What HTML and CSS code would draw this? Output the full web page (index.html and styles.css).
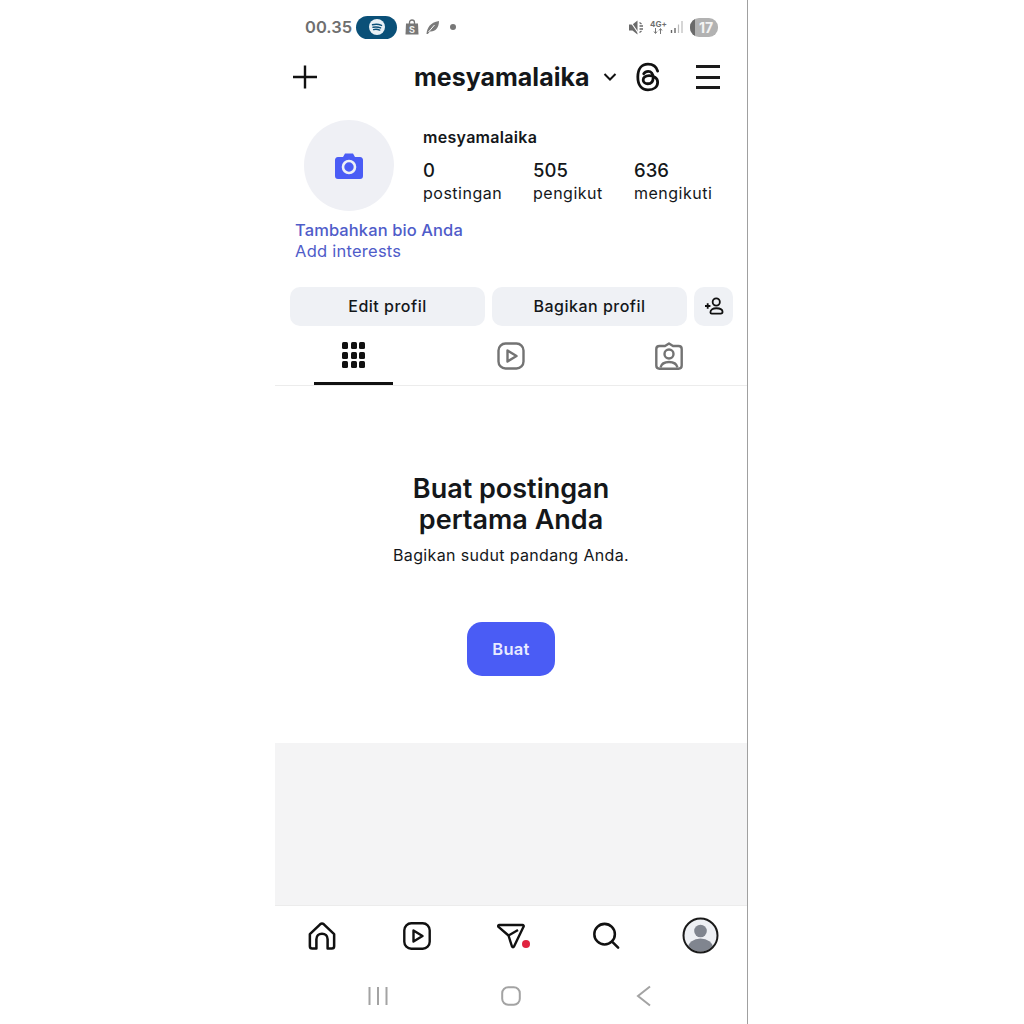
FILE: index.html
```html
<!DOCTYPE html>
<html lang="en">
<head>
    <meta charset="UTF-8">
    <link rel="stylesheet" href="styles.css">
</head>
<body>
    <div class="phone">
        <!-- status bar -->
        <div class="status">
            <span class="time">00.35</span>
            <span class="pill">
                <svg width="18" height="18" viewBox="0 0 18 18"><circle cx="9" cy="9" r="8" fill="#e9f1f6"/><path d="M4.500 6.800C7.500 6 10.500 6.100 13.500 7.400M5 9.300C7.400 8.700 10 8.800 12.600 9.900M5.600 11.600C7.600 11.100 9.700 11.200 11.700 12.100" fill="none" stroke="#0a5078" stroke-width="1.400" stroke-linecap="round"/></svg>
            </span>
            <span class="shop">
                <svg width="14" height="16" viewBox="0 0 14 16"><path d="M4.500 5V3.500C4.500 2 5.500 1 7 1C8.500 1 9.500 2 9.500 3.500V5" fill="none" stroke="#777" stroke-width="1.300"/><path d="M1 4.500H13L13.500 15.500H.5Z" fill="#777"/><text x="7" y="13.500" class="shop-s">S</text></svg>
            </span>
            <svg class="leaf" width="15" height="15" viewBox="0 0 15 15"><path d="M1.500 14C2 8 5 2.500 14 1C14 8 10 12 5 11.500L2.800 14Z" fill="#7b7b7b"/><path d="M3.500 12L9.500 5" stroke="#fff" stroke-width="1"/></svg>
            <span class="dot"></span>
            <span class="status-right">
                <svg width="15" height="15" viewBox="0 0 15 15"><path d="M0 4.500H3.500L8.500 .5V14.500L3.500 10.500H0Z" fill="#6a6a6a"/><path d="M1 1L10 14" stroke="#fff" stroke-width="1.200"/><path d="M10.500 2.500L12.500 4M10.500 6H14M10.500 9H14M10.500 12.500L12.500 11" stroke="#6a6a6a" stroke-width="1.300"/></svg>
                <span class="net">4G+<svg class="net-arrows" width="12" height="6" viewBox="0 0 12 6"><path d="M3.500 0V5M2 3.500L3.500 5.500L5 3.500M8.500 6V1M7 2.500L8.500 .5L10 2.500" fill="none" stroke="#777" stroke-width="1"/></svg></span>
                <svg class="signal" width="14" height="14" viewBox="0 0 14 14"><path d="M1.500 10V13M5 8V13" stroke="#666" stroke-width="1.400"/><path d="M8.500 4.500V13M12 1V13" stroke="#bbb" stroke-width="1.200"/></svg>
                <span class="battery"><span class="battery-low"></span><span class="battery-num">17</span></span>
            </span>
        </div>

        <!-- top header -->
        <div class="header">
            <svg class="plus" width="26" height="26" viewBox="0 0 26 26"><path d="M13 1.500V24.500M1 13H25" stroke="#111" stroke-width="2.400"/></svg>
            <span class="handle">mesyamalaika</span>
            <svg class="chevron" width="16" height="10" viewBox="0 0 16 10"><path d="M2.500 2L8 7.500L13.500 2" fill="none" stroke="#111" stroke-width="2"/></svg>
            <svg class="threads" width="26" height="30" viewBox="0 0 24 28"><path d="M21 8.500C19.700 4 16.300 2 12 2C6 2 2.500 6.500 2.500 14C2.500 21.500 6 26 12 26C17.500 26 21 23 21 18.800C21 14.800 17.500 12.800 13 12.800C9.500 12.800 7.500 14.500 7.500 16.800C7.500 19 9.500 20.300 11.700 20.300C15 20.300 16.800 18.200 16.800 14.600C16.800 11 15 8.800 12.200 8.800C10.300 8.800 8.900 9.600 8 11" fill="none" stroke="#111" stroke-width="2.600" stroke-linecap="round"/></svg>
            <div class="burger"><span></span><span></span><span></span></div>
        </div>

        <!-- profile summary -->
        <div class="profile">
            <div class="avatar">
                <svg width="30" height="28" viewBox="0 0 30 28"><path d="M4 5H9L11 1.500H19L21 5H26C28 5 29 6.500 29 8V24C29 26 28 27 26 27H4C2 27 1 26 1 24V8C1 6.500 2 5 4 5Z" fill="#4a5cf5"/><circle cx="15" cy="15" r="6" fill="none" stroke="#eef0f6" stroke-width="2.600"/></svg>
            </div>
            <div class="info">
                <p class="name">mesyamalaika</p>
                <div class="stats">
                    <div class="stat stat-posts"><b>0</b><span>postingan</span></div>
                    <div class="stat stat-followers"><b>505</b><span>pengikut</span></div>
                    <div class="stat"><b>636</b><span>mengikuti</span></div>
                </div>
            </div>
        </div>
        <p class="bio">Tambahkan bio Anda</p>
        <p class="interests">Add interests</p>

        <!-- action buttons -->
        <div class="actions">
            <div class="btn">Edit profil</div>
            <div class="btn">Bagikan profil</div>
            <div class="btn btn-icon">
                <svg width="20" height="18" viewBox="0 0 22 20"><path d="M1 10H7M4 7V13" stroke="#111" stroke-width="2"/><circle cx="13.500" cy="5.500" r="4" fill="none" stroke="#111" stroke-width="2"/><path d="M7 17C7 13.800 10 12.500 13.500 12.500C17 12.500 20.500 13.800 20.500 16.500C20.500 18 19.500 18.500 18.500 18.500H8.500C7.500 18.500 7 18 7 17Z" fill="none" stroke="#111" stroke-width="2"/></svg>
            </div>
        </div>

        <!-- tabs -->
        <div class="tabs">
            <div class="tab tab-active">
                <div class="grid-icon"><i></i><i></i><i></i><i></i><i></i><i></i><i></i><i></i><i></i></div>
            </div>
            <div class="tab">
                <svg width="28" height="28" viewBox="0 0 28 28"><rect x="1.500" y="1.500" width="25" height="25" rx="7" fill="none" stroke="#737373" stroke-width="2.400"/><path d="M10.500 8.500L19.500 14L10.500 19.500Z" fill="none" stroke="#737373" stroke-width="2.400" stroke-linejoin="round"/></svg>
            </div>
            <div class="tab tab-tagged">
                <svg width="28" height="28" viewBox="0 0 28 28"><path d="M4.500 4H10L14 1.500L18 4H23.500C25.500 4 26.700 5.200 26.700 7V23.500C26.700 25.500 25.500 26.700 23.500 26.700H4.500C2.500 26.700 1.300 25.500 1.300 23.500V7C1.300 5.200 2.500 4 4.500 4Z" fill="none" stroke="#737373" stroke-width="2.400" stroke-linejoin="round"/><circle cx="14" cy="12" r="4.500" fill="none" stroke="#737373" stroke-width="2.400"/><path d="M5.500 25.500C6.500 21.500 10 20 14 20C18 20 21.500 21.500 22.500 25.500" fill="none" stroke="#737373" stroke-width="2.400"/></svg>
            </div>
        </div>

        <!-- empty state -->
        <div class="empty">
            <h1>Buat postingan<br>pertama Anda</h1>
            <p>Bagikan sudut pandang Anda.</p>
            <div class="create">Buat</div>
        </div>

        <div class="gray-area"></div>

        <!-- bottom nav -->
        <div class="nav">
            <div class="nav-item">
                <svg width="28" height="28" viewBox="0 0 30 30"><path d="M2 13L13 2.500C14.200 1.500 15.800 1.500 17 2.500L28 13V26C28 27.500 27 28.500 25.500 28.500H21V18.500C21 15 18.500 12.500 15 12.500C11.500 12.500 9 15 9 18.500V28.500H4.500C3 28.500 2 27.500 2 26Z" fill="none" stroke="#111" stroke-width="2.700" stroke-linejoin="round"/></svg>
            </div>
            <div class="nav-item">
                <svg width="28" height="28" viewBox="0 0 28 28"><rect x="1.300" y="1.300" width="25.400" height="25.400" rx="7" fill="none" stroke="#111" stroke-width="2.400"/><path d="M10.500 8.500L19.500 14L10.500 19.500Z" fill="none" stroke="#111" stroke-width="2.400" stroke-linejoin="round"/></svg>
            </div>
            <div class="nav-item">
                <svg class="send" width="28" height="26" viewBox="0 0 28 26"><path d="M2 2H25.500C26.500 2 27 3 26.500 3.800L17 23.500C16.500 24.500 15.500 24.500 15 23.500L11.500 12.500L1.500 3.800C.9 3.200 1.200 2 2 2Z" fill="none" stroke="#111" stroke-width="2.400" stroke-linejoin="round"/><path d="M11.500 12.500L21 7" stroke="#111" stroke-width="2.400"/></svg>
                <span class="red-dot"></span>
            </div>
            <div class="nav-item nav-search">
                <svg width="28" height="28" viewBox="0 0 30 30"><circle cx="13.500" cy="13" r="11" fill="none" stroke="#111" stroke-width="2.700"/><path d="M21.500 21L28 27.500" stroke="#111" stroke-width="2.700" stroke-linecap="round"/></svg>
            </div>
            <div class="nav-item nav-me">
                <svg width="37" height="37" viewBox="0 0 37 37"><defs><clipPath id="avatarClip"><circle cx="18.500" cy="18.500" r="16"/></clipPath></defs><circle cx="18.500" cy="18.500" r="16.500" fill="#eef0f4"/><g clip-path="url(#avatarClip)" fill="#80858f"><circle cx="18.500" cy="14" r="6.300"/><ellipse cx="18.500" cy="31" rx="12.500" ry="9.500"/></g><circle cx="18.500" cy="18.500" r="17" fill="none" stroke="#1a1a1a" stroke-width="2"/></svg>
            </div>
        </div>

        <!-- android buttons -->
        <div class="android">
            <div class="nav-item">
                <svg width="20" height="20" viewBox="0 0 20 20"><path d="M1.500 1V19M10 1V19M18.500 1V19" stroke="#a3a3a3" stroke-width="2"/></svg>
            </div>
            <div class="nav-item">
                <svg width="20" height="20" viewBox="0 0 20 20"><rect x="1.200" y="1.200" width="17.600" height="17.600" rx="6" fill="none" stroke="#a3a3a3" stroke-width="2"/></svg>
            </div>
            <div class="nav-item">
                <svg width="16" height="22" viewBox="0 0 16 22"><path d="M14 1.500L2 11L14 20.500" fill="none" stroke="#a3a3a3" stroke-width="2"/></svg>
            </div>
        </div>
    </div>
</body>
</html>
```

FILE: styles.css
```css
body {
    font-family: "Inter", "Liberation Sans", sans-serif;
    background-color: #fff;
    color: #14171a;
    margin: 0;
}

p, h1 {
    margin: 0;
}

svg {
    display: block;
}

.phone {
    width: 472px;
    height: 1024px;
    margin-left: 275px;
    border-right: 1px solid #a0a0a0;
    overflow: hidden;
}

/* status bar */
.status {
    display: flex;
    align-items: center;
    height: 54px;
    padding: 0 29px 0 30px;
    color: #6f6f6f;
}

.time {
    font-size: 16.500px;
    font-weight: 600;
    width: 51px;
}

.pill {
    display: flex;
    align-items: center;
    justify-content: center;
    width: 41px;
    height: 23px;
    border-radius: 12px;
    background-color: #0a5078;
}

.shop {
    width: 14px;
    margin-left: 8px;
}

.shop-s {
    fill: #eee;
    font-size: 9px;
    font-weight: 700;
    text-anchor: middle;
}

.leaf {
    margin-left: 6px;
}

.dot {
    width: 6px;
    height: 6px;
    margin-left: 10px;
    border-radius: 50%;
    background-color: #777;
}

.status-right {
    display: flex;
    align-items: center;
    margin-left: auto;
}

.net {
    display: block;
    width: 16px;
    margin-left: 6px;
    font-size: 8px;
    font-weight: 700;
    line-height: 8px;
    color: #6f6f6f;
    white-space: nowrap;
}

.net-arrows {
    margin-left: 2px;
}

.signal {
    margin-left: 4px;
}

.battery {
    position: relative;
    display: block;
    width: 28px;
    height: 19px;
    margin-left: 6px;
    border-radius: 9px;
    background-color: #b2b2b2;
    overflow: hidden;
}

.battery-low {
    display: block;
    width: 5px;
    height: 19px;
    background-color: #6a6a6a;
}

.battery-num {
    position: absolute;
    top: 0;
    left: 5px;
    width: 22px;
    text-align: center;
    font-size: 14px;
    font-weight: 700;
    line-height: 19px;
    color: #f4f4f4;
}

/* header */
.header {
    display: flex;
    align-items: center;
    height: 46px;
    padding-left: 17px;
}

.handle {
    margin-left: 96px;
    font-size: 25px;
    font-weight: 700;
}

.chevron {
    margin-left: 13px;
}

.threads {
    margin-left: 17px;
}

.burger {
    display: flex;
    flex-direction: column;
    gap: 7.500px;
    width: 24px;
    margin-left: 35px;
}

.burger span {
    display: block;
    height: 3px;
    background-color: #1a1a1a;
}

/* profile */
.profile {
    display: flex;
    margin-top: 20px;
    padding-left: 29px;
}

.avatar {
    display: flex;
    align-items: center;
    justify-content: center;
    flex-shrink: 0;
    width: 90px;
    height: 91px;
    border-radius: 50%;
    background-color: #eff0f5;
}

.info {
    margin-left: 29px;
    padding-top: 7px;
}

.name {
    font-size: 16px;
    font-weight: 600;
    line-height: 20px;
    letter-spacing: 0.3px;
}

.stats {
    display: flex;
    margin-top: 12px;
}

.stat {
    display: flex;
    flex-direction: column;
}

.stat-posts {
    width: 110px;
}

.stat-followers {
    width: 101px;
}

.stat b {
    font-size: 18.500px;
    font-weight: 500;
    line-height: 23px;
}

.stat span {
    font-size: 16px;
    line-height: 22px;
    letter-spacing: 0.5px;
}

.bio {
    margin-top: 8px;
    padding-left: 20px;
    color: #4f5cc9;
    font-size: 16.500px;
    font-weight: 500;
    line-height: 22px;
    letter-spacing: 0.1px;
}

.interests {
    padding-left: 20px;
    color: #4f5cc9;
    font-size: 16.500px;
    line-height: 21px;
    letter-spacing: 0.25px;
}

/* buttons */
.actions {
    display: flex;
    gap: 7px;
    margin-top: 25px;
    padding-left: 15px;
}

.btn {
    display: flex;
    align-items: center;
    justify-content: center;
    width: 195px;
    height: 39px;
    border-radius: 10px;
    background-color: #eff1f5;
    font-size: 16px;
    font-weight: 500;
    letter-spacing: 0.5px;
    padding-bottom: 1px;
    box-sizing: border-box;
}

.btn-icon {
    width: 39px;
}

/* tabs */
.tabs {
    display: grid;
    grid-template-columns: repeat(3, 1fr);
    margin-top: 6px;
    border-bottom: 1px solid #ececec;
    box-sizing: border-box;
    height: 54px;
}

.tab {
    position: relative;
    display: flex;
    justify-content: center;
    padding-top: 10px;
}

.tab-tagged svg {
    margin-left: 2px;
}

.tab-active::after {
    content: "";
    position: absolute;
    left: 39px;
    bottom: 0;
    width: 79px;
    height: 3px;
    background-color: #111;
}

.grid-icon {
    display: grid;
    grid-template-columns: repeat(3, 6px);
    grid-auto-rows: 7px;
    gap: 2.500px;
}

.grid-icon i {
    display: block;
    border-radius: 1.500px;
    background-color: #111;
}

/* empty state */
.empty {
    display: flex;
    flex-direction: column;
    align-items: center;
    height: 357px;
    padding-top: 88px;
    box-sizing: border-box;
    text-align: center;
}

.empty h1 {
    font-size: 27px;
    font-weight: 600;
    line-height: 30.500px;
}

.empty p {
    margin-top: 9px;
    font-size: 16px;
    line-height: 22px;
    letter-spacing: 0.35px;
}

.create {
    width: 88px;
    height: 54px;
    margin-top: 56px;
    border-radius: 15px;
    background-color: #4a5cf5;
    color: #e8ebff;
    font-size: 16.500px;
    font-weight: 600;
    line-height: 54px;
    letter-spacing: 0.3px;
}

.gray-area {
    height: 162px;
    background-color: #f4f4f5;
    border-bottom: 1px solid #ececec;
}

/* bottom nav */
.nav {
    display: grid;
    grid-template-columns: repeat(5, 1fr);
    height: 59px;
}

.nav-item {
    position: relative;
    display: flex;
    align-items: center;
    justify-content: center;
}

.nav-search svg {
    margin-left: 2px;
}

.nav-me svg {
    margin-left: 2px;
}

.red-dot {
    position: absolute;
    top: 34px;
    left: 58px;
    width: 8px;
    height: 8px;
    border-radius: 50%;
    background-color: #e0233f;
}

.android {
    display: grid;
    grid-template-columns: repeat(3, 1fr);
    height: 59px;
    padding: 1px 37px 0;
}
```
